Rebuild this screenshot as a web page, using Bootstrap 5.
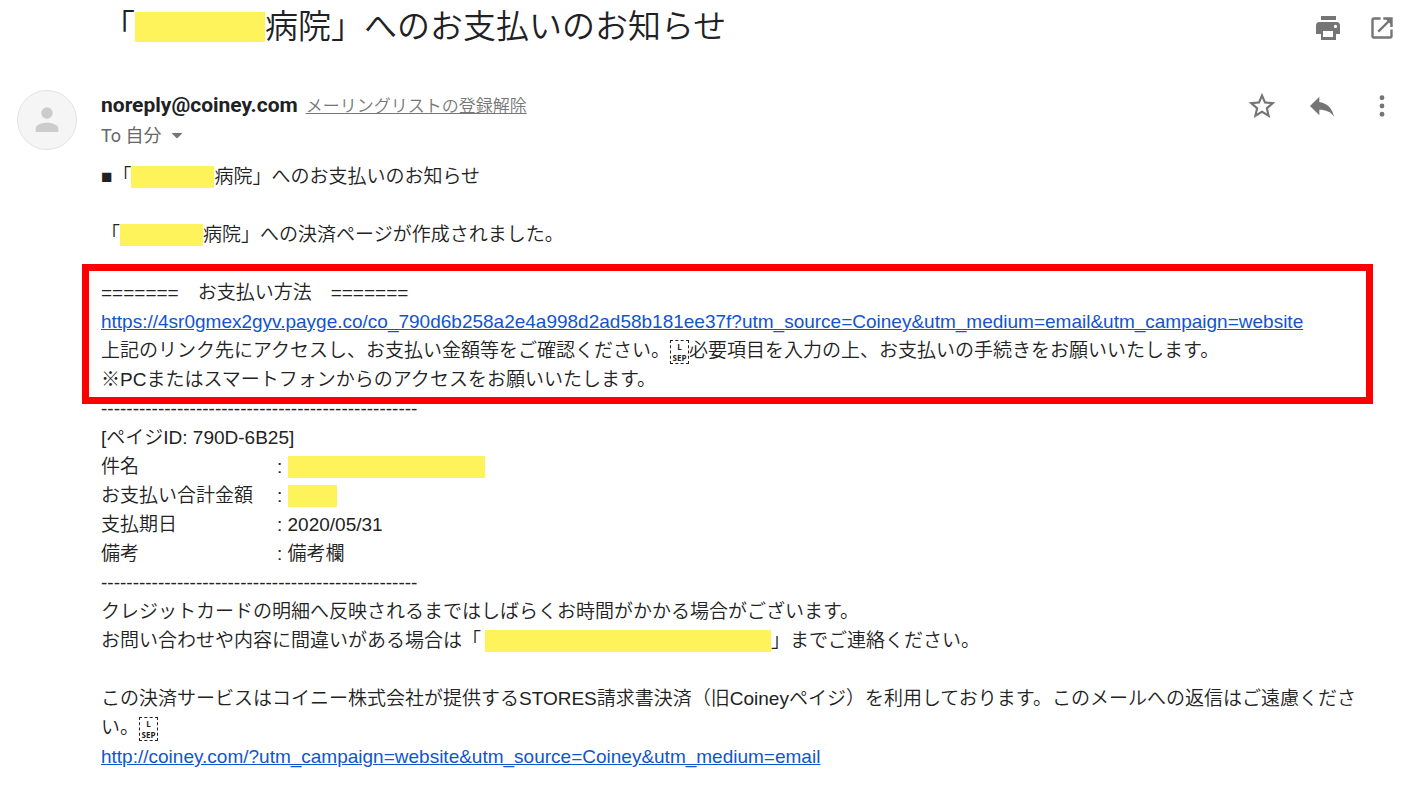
<!DOCTYPE html>
<html lang="ja">
<head>
<meta charset="utf-8">
<meta name="viewport" content="width=device-width, initial-scale=1">
<title>お支払いのお知らせ</title>
<link href="https://cdn.jsdelivr.net/npm/bootstrap@5.3.0/dist/css/bootstrap.min.css" rel="stylesheet">
<style>
  body { font-family: "Liberation Sans", "Noto Sans CJK JP", sans-serif; color: #222; }
  .subject { font-family: Roboto, "Noto Sans CJK JP", sans-serif; font-size: 33px; line-height: 40px; font-weight: 350; color: #202124; padding-left: 102px; }
  .subject-bar { padding-top: 7px; padding-right: 32px; }
  .subject-tools { gap: 30px; padding-top: 9px; }
  .icon-btn { border: 0; padding: 0; background: none; color: #757575; line-height: 0; }
  .sender-bar { margin-top: 43px; padding-left: 17px; padding-right: 28px; gap: 24px; font-family: Roboto, "Noto Sans CJK JP", sans-serif; }
  .sender-tools { gap: 28px; }
  .avatar { width: 60px; height: 60px; background: #f5f5f5; border: 1px solid #e2e2e2; }
  .sender-name { font-size: 21px; line-height: 30px; font-weight: 700; color: #202124; }
  .unsubscribe { font-size: 17px; line-height: 30px; font-weight: 350; color: #777; }
  .recipient { font-size: 18px; line-height: 30px; font-weight: 400; color: #666; }
  .mail-text { font-size: 19px; line-height: 29px; font-weight: 350; padding: 11px 33px 20px 101px; }
  .mail-text a { color: #15c; overflow-wrap: anywhere; }
  .redacted { display: inline-block; height: 22px; background: #fff35c; vertical-align: -5px; }
  .subject .redacted { height: 30px; width: 130px; vertical-align: -4px; }
  .w-name { width: 83px; }
  .w-title { width: 197px; }
  .w-amount { width: 49px; }
  .w-contact { width: 286px; margin-left: 4px; }
  .pay-box { border: 7px solid #f00; margin: 15px 20px -10px -19px; padding: 7px 12px 3px 12px; }
  .details { line-height: 29px; }
  .details th { width: 176px; padding: 0; font-weight: 350; }
  .details td { padding: 0; }
  .sep-glyph { display: inline-block; text-align: center; width: 19px; height: 24px; border: 1px dashed #222; font-family: "Liberation Sans Narrow", "Open Sans", sans-serif; font-size: 8px; line-height: 11px; font-weight: 700; vertical-align: middle; }
</style>
</head>
<body>
<header class="subject-bar d-flex justify-content-between align-items-start">
  <h1 class="subject m-0">「<span class="redacted"></span>病院」へのお支払いのお知らせ</h1>
  <div class="subject-tools d-flex flex-shrink-0">
    <button type="button" class="icon-btn" aria-label="印刷">
      <svg width="24" height="24" viewBox="0 0 24 24" fill="currentColor"><path fill-rule="evenodd" d="M5 0h15v4H5zM3.500 6h17A3.500 3.500 0 0 1 24 9.500V18h-4v6H5v-6H0V9.500A3.500 3.500 0 0 1 3.500 6zM7 15v6h10v-6zM19.500 8.800a1.600 1.600 0 1 0 0 3.200 1.600 1.600 0 0 0 0-3.200z"/></svg>
    </button>
    <button type="button" class="icon-btn" aria-label="新しいウィンドウで開く">
      <svg width="24" height="24" viewBox="0 0 24 24" fill="none" stroke="currentColor" stroke-width="2.400"><path d="M10.600 2.500H4A1.500 1.500 0 0 0 2.500 4v16A1.500 1.500 0 0 0 4 21.500h16a1.500 1.500 0 0 0 1.500-1.500v-6.600M13.300 2.500h8.200V11M21 3L8.300 15.700"/><path d="M15 2.500h6.500V9z" fill="currentColor" stroke="none"/></svg>
    </button>
  </div>
</header>

<section class="sender-bar d-flex align-items-start">
  <div class="avatar rounded-circle flex-shrink-0 d-flex align-items-center justify-content-center">
    <svg width="24" height="26" viewBox="0 0 24 26" fill="#ccc"><circle cx="12" cy="6" r="5.700"/><path d="M.700 25v-3.500C.700 17.500 8 15.800 12 15.800s11.300 1.700 11.300 5.700V25z"/></svg>
  </div>
  <div class="flex-grow-1">
    <div><span class="sender-name me-1">noreply@coiney.com</span> <a href="#" class="unsubscribe">メーリングリストの登録解除</a></div>
    <div class="recipient d-flex align-items-center">To 自分
      <button type="button" class="icon-btn ms-2" aria-label="詳細を表示"><svg width="14" height="6" viewBox="0 0 14 6" fill="currentColor"><path d="M1.500 0h11L7 5.500z"/></svg></button>
    </div>
  </div>
  <div class="sender-tools d-flex flex-shrink-0">
    <button type="button" class="icon-btn" aria-label="スター"><svg width="32" height="32" viewBox="0 0 24 24" fill="currentColor"><path d="M22 9.240l-7.190-.620L12 2 9.190 8.630 2 9.240l5.460 4.730L5.820 21 12 17.270 18.180 21l-1.630-7.030L22 9.240zM12 15.400l-3.760 2.270 1-4.280-3.320-2.880 4.380-.380L12 6.100l1.710 4.040 4.380.380-3.320 2.880 1 4.280L12 15.400z"/></svg></button>
    <button type="button" class="icon-btn" aria-label="返信"><svg width="32" height="32" viewBox="0 0 24 24" fill="currentColor"><path d="M10 9V5l-7 7 7 7v-4.100c5 0 8.500 1.600 11 5.100-1-5-4-10-11-11z"/></svg></button>
    <button type="button" class="icon-btn" aria-label="その他"><svg width="32" height="32" viewBox="0 0 24 24" fill="currentColor"><circle cx="12" cy="5.800" r="1.800"/><circle cx="12" cy="12" r="1.800"/><circle cx="12" cy="18.200" r="1.800"/></svg></button>
  </div>
</section>

<main class="mail-text">
  <p class="m-0">■「<span class="redacted w-name"></span>病院」へのお支払いのお知らせ<br><br>「<span class="redacted w-name"></span>病院」への決済ページが作成されました。</p>
  <div class="pay-box">
    =======　お支払い方法　=======<br>
    <a href="#">https://4sr0gmex2gyv.payge.co/co_790d6b258a2e4a998d2ad58b181ee37f?utm_source=Coiney&amp;utm_medium=email&amp;utm_campaign=website</a><br>
    上記のリンク先にアクセスし、お支払い金額等をご確認ください。<span class="sep-glyph">L<br>SEP</span>必要項目を入力の上、お支払いの手続きをお願いいたします。<br>
    ※PCまたはスマートフォンからのアクセスをお願いいたします。
  </div>
  <div>--------------------------------------------------</div>
  <div>[ペイジID: 790D-6B25]</div>
  <table class="details">
    <tbody>
      <tr><th scope="row">件名</th><td>: <span class="redacted w-title"></span></td></tr>
      <tr><th scope="row">お支払い合計金額</th><td>: <span class="redacted w-amount"></span></td></tr>
      <tr><th scope="row">支払期日</th><td>: 2020/05/31</td></tr>
      <tr><th scope="row">備考</th><td>: 備考欄</td></tr>
    </tbody>
  </table>
  <div>--------------------------------------------------</div>
  <p class="m-0">クレジットカードの明細へ反映されるまではしばらくお時間がかかる場合がございます。<br>お問い合わせや内容に間違いがある場合は「<span class="redacted w-contact"></span>」までご連絡ください。<br><br>この決済サービスはコイニー株式会社が提供するSTORES請求書決済（旧Coineyペイジ）を利用しております。このメールへの返信はご遠慮ください。<span class="sep-glyph">L<br>SEP</span><br><a href="#">http://coiney.com/?utm_campaign=website&amp;utm_source=Coiney&amp;utm_medium=email</a></p>
</main>
<script src="https://cdn.jsdelivr.net/npm/bootstrap@5.3.0/dist/js/bootstrap.bundle.min.js"></script>
</body>
</html>
